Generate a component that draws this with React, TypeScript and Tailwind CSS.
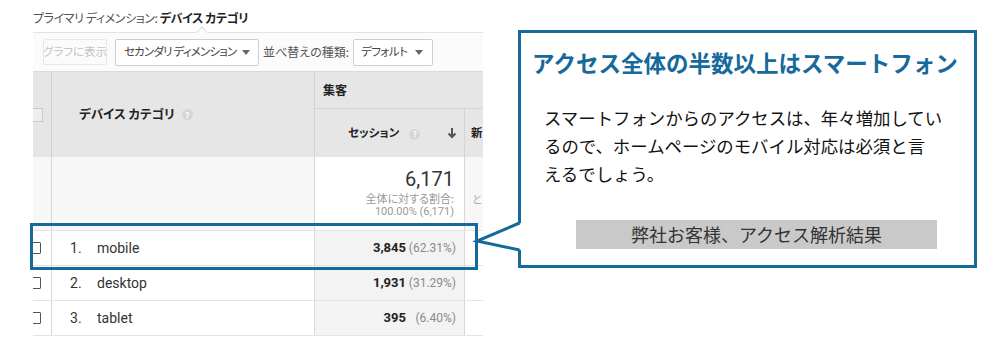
import React from "react";

const jp = "font-['Noto_Sans_CJK_JP',sans-serif] [font-feature-settings:'palt']";
const roboto = "font-['Roboto','Noto_Sans_CJK_JP',sans-serif]";
const blue = "#16699b";

type Row = { no: number; name: string; sessions: string; pct: string };

const rows: Row[] = [
  { no: 1, name: "mobile", sessions: "3,845", pct: "(62.31%)" },
  { no: 2, name: "desktop", sessions: "1,931", pct: "(31.29%)" },
  { no: 3, name: "tablet", sessions: "395", pct: "(6.40%)" },
];

function Help() {
  return (
    <span className="inline-flex items-center justify-center w-[11px] h-[11px] rounded-full bg-[#d6d6d6] text-white text-[8px] font-bold leading-none">
      ?
    </span>
  );
}

function Caret() {
  return (
    <svg width="8" height="5" viewBox="0 0 8 5" className="shrink-0">
      <path d="M0 0h8L4 5z" fill="#666" />
    </svg>
  );
}

function CheckBox() {
  return <div className="w-[12px] h-[12px] -ml-[4px] border border-[#555] bg-white rounded-[1px]" />;
}

export default function App() {
  return (
    <div className="relative w-[1005px] h-[359px] bg-white overflow-hidden flex">
      {/* Analytics screenshot */}
      <div className={`ml-[33px] w-[450px] shrink-0 overflow-hidden flex flex-col ${jp}`}>
        <div className="h-[32px] pt-[10px] text-[12px] leading-[16px] tracking-[-0.4px] whitespace-nowrap">
          <span className="text-[#555]">プライマリ ディメンション: </span>
          <span className="text-[#222] font-bold">デバイス カテゴリ</span>
        </div>

        {/* Toolbar */}
        <div className="relative h-[39px] border-t border-[#e2e2e2] bg-[#fbfbfb] flex items-center pl-[10px] text-[12px] whitespace-nowrap">
          <div className="absolute -top-[5px] left-[165px] w-[8px] h-[8px] rotate-45 border-l border-t border-[#e2e2e2] bg-[#fbfbfb]" />
          <div className="w-[64px] h-[26px] border border-[#e8e8e8] rounded-[2px] flex items-center justify-center text-[#c4c4c4] text-[11.5px]">
            グラフに表示
          </div>
          <div className="ml-[8px] w-[144px] h-[27px] border border-[#cfcfcf] rounded-[2px] bg-white flex items-center justify-between pl-[8px] pr-[8px] text-[#444]">
            <span className="text-[11.5px] tracking-[-0.8px]">セカンダリ ディメンション</span>
            <Caret />
          </div>
          <span className="ml-[4px] text-[#555]">並べ替えの種類:</span>
          <div className="ml-[4px] w-[80px] h-[27px] border border-[#cfcfcf] rounded-[2px] bg-white flex items-center justify-between pl-[7px] pr-[9px] text-[#444]">
            <span className="text-[11.5px] tracking-[-0.5px]">デフォルト</span>
            <Caret />
          </div>
        </div>

        {/* Header */}
        <div className="flex h-[86px] bg-[#e6e6e6] border-t border-[#dadada] text-[#222] font-bold">
          <div className="w-[19px] shrink-0 border-r border-[#cfcfcf] flex items-center">
            <div className="w-[12px] h-[14px] -ml-[2px] border border-[#c8c8c8] bg-[#eeeeee]" />
          </div>
          <div className="w-[263px] shrink-0 border-r border-[#d4d4d4] flex items-center gap-[7px] pl-[27px] text-[12.5px]">
            <span>デバイス カテゴリ</span>
            <Help />
          </div>
          <div className="flex-1 flex flex-col">
            <div className="h-[37px] shrink-0 border-b border-[#d4d4d4] flex items-center pl-[8px] text-[12px]">集客</div>
            <div className="flex-1 flex">
              <div className="w-[150px] shrink-0 border-r border-[#d4d4d4] flex items-center pl-[33px] pr-[7px] text-[11.5px]">
                <span>セッション</span>
                <span className="ml-[10px]">
                  <Help />
                </span>
                <svg width="10" height="12" viewBox="0 0 10 12" className="ml-auto">
                  <path d="M5 1v9M1.5 6.5 5 10l3.5-3.5" stroke="#555" strokeWidth="2" fill="none" />
                </svg>
              </div>
              <div className="flex items-center pl-[6px] text-[11.5px]">新</div>
            </div>
          </div>
        </div>

        {/* Summary row */}
        <div className="flex h-[74px] border-b border-[#e4e4e4]">
          <div className="w-[19px] shrink-0 bg-[#f7f7f7] border-r border-[#d8d8d8]" />
          <div className="w-[263px] shrink-0 bg-[#f7f7f7] border-r border-[#d8d8d8]" />
          <div className="w-[150px] shrink-0 bg-white border-r border-[#d8d8d8] flex flex-col items-end pr-[10px] pt-[10px]">
            <span className={`${roboto} text-[20px] leading-[24px] text-[#333]`}>6,171</span>
            <span className="mt-[1px] text-[11px] leading-[13px] text-[#9a9a9a]">全体に対する割合:</span>
            <span className={`${roboto} text-[11px] leading-[13px] text-[#9a9a9a]`}>100.00% (6,171)</span>
          </div>
          <div className="flex-1 bg-[#f7f7f7] pl-[7px] pt-[36px] text-[11px] leading-[13px] text-[#aaa]">と</div>
        </div>

        {/* Data rows */}
        {rows.map((r) => (
          <div key={r.no} className={`flex h-[35px] border-b border-[#e4e4e4] ${roboto} text-[14px] text-[#333]`}>
            <div className="w-[19px] shrink-0 border-r border-[#d8d8d8] flex items-center">
              <CheckBox />
            </div>
            <div className="w-[263px] shrink-0 border-r border-[#d8d8d8] flex items-center pl-[18px]">
              <span className="w-[27px]">{r.no}.</span>
              <span>{r.name}</span>
            </div>
            <div className="w-[150px] shrink-0 bg-[#f3f3f3] border-r border-[#d8d8d8] flex items-center justify-end pr-[8px]">
              <span className="font-bold text-[13px] text-[#222]">{r.sessions}</span>
              <span className="w-[50px] text-right text-[12px] text-[#8a8a8a]">{r.pct}</span>
            </div>
            <div className="flex-1" />
          </div>
        ))}
      </div>

      {/* Callout */}
      <div className="ml-[35px] mt-[30px] w-[459px] h-[238px] shrink-0 border-[3px] border-[#16699b] bg-white flex flex-col font-['Noto_Sans_CJK_JP',sans-serif]">
        <div className="pl-[11px] pt-[14px] text-[22.5px] leading-[30px] font-bold text-[#16699b] whitespace-nowrap">
          アクセス全体の半数以上はスマートフォン
        </div>
        <p className="mt-[27px] pl-[23px] pr-[10px] text-[17.4px] leading-[28px] text-[#111]">
          スマートフォンからのアクセスは、年々増加してい
          <br />
          るので、ホームページのモバイル対応は必須と言
          <br />
          えるでしょう。
        </p>
        <div className="mt-[32px] ml-[55px] w-[361px] h-[29px] bg-[#c9c9c9] flex items-center justify-center text-[18px] text-[#333] whitespace-nowrap">
          弊社お客様、アクセス解析結果
        </div>
      </div>

      {/* Highlight around mobile row */}
      <div className="absolute left-[30px] top-[223px] w-[448px] h-[47px] border-[3px] border-[#16699b]" />

      {/* Callout tail */}
      <svg className="absolute left-[470px] top-[215px]" width="56" height="40" viewBox="0 0 56 40">
        <polygon points="51,8 7,26 51,35" fill="white" />
        <polyline points="49.5,8 7,26 49.5,35" fill="none" stroke={blue} strokeWidth="3" />
      </svg>
    </div>
  );
}
